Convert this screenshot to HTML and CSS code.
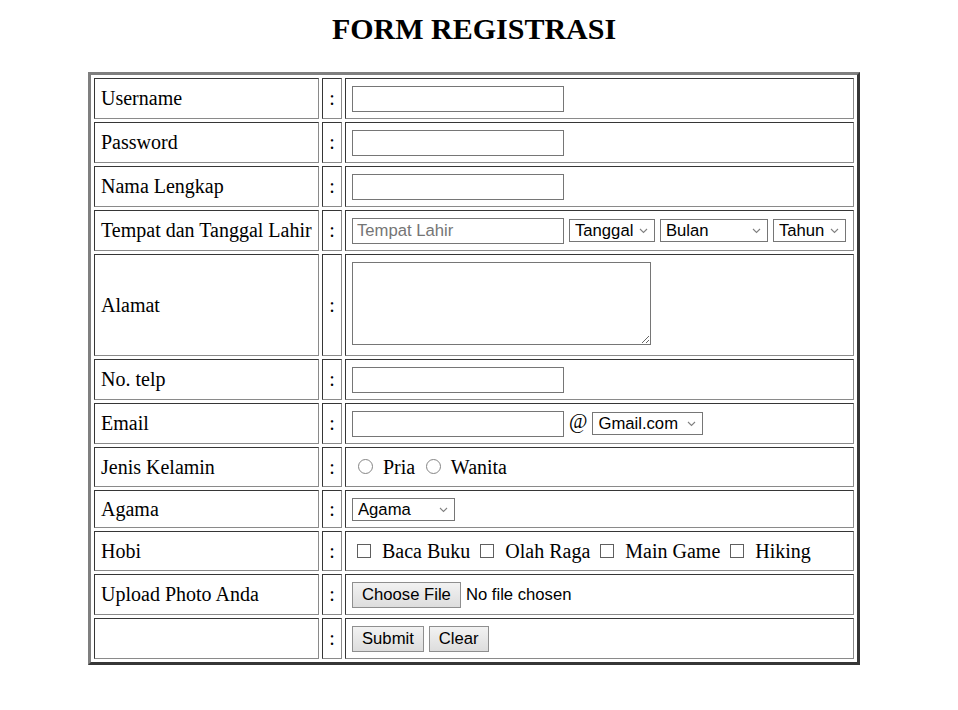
FILE: index.html
```html
<!DOCTYPE html>
<html>
<head>
<meta charset="utf-8">
<title>Form Registrasi</title>
<link rel="stylesheet" href="styles.css">
</head>
<body>
<div class="page">
  <h2 class="title">FORM REGISTRASI</h2>
  <form>
  <table class="form-table">
    <tr class="row">
      <td class="c-label">Username</td><td class="c-colon">:</td>
      <td class="c-field"><input class="txt" type="text"></td>
    </tr>
    <tr class="row">
      <td class="c-label">Password</td><td class="c-colon">:</td>
      <td class="c-field"><input class="txt" type="password"></td>
    </tr>
    <tr class="row">
      <td class="c-label">Nama Lengkap</td><td class="c-colon">:</td>
      <td class="c-field"><input class="txt" type="text"></td>
    </tr>
    <tr class="row">
      <td class="c-label">Tempat dan Tanggal Lahir</td><td class="c-colon">:</td>
      <td class="c-field"><input class="txt" type="text" placeholder="Tempat Lahir"> <select class="sel sel-tgl"><option>Tanggal</option></select> <select class="sel sel-bln"><option>Bulan</option></select> <select class="sel sel-thn"><option>Tahun</option></select></td>
    </tr>
    <tr class="row row-tall">
      <td class="c-label">Alamat</td><td class="c-colon">:</td>
      <td class="c-field"><textarea class="area"></textarea></td>
    </tr>
    <tr class="row">
      <td class="c-label">No. telp</td><td class="c-colon">:</td>
      <td class="c-field"><input class="txt" type="text"></td>
    </tr>
    <tr class="row">
      <td class="c-label">Email</td><td class="c-colon">:</td>
      <td class="c-field"><input class="txt" type="text"> @ <select class="sel sel-mail"><option>Gmail.com</option></select></td>
    </tr>
    <tr class="row row-40">
      <td class="c-label">Jenis Kelamin</td><td class="c-colon">:</td>
      <td class="c-field"><input class="radio" type="radio" name="jk"> Pria <input class="radio" type="radio" name="jk"> Wanita</td>
    </tr>
    <tr class="row row-38">
      <td class="c-label">Agama</td><td class="c-colon">:</td>
      <td class="c-field"><select class="sel sel-agama"><option>Agama</option></select></td>
    </tr>
    <tr class="row row-40">
      <td class="c-label">Hobi</td><td class="c-colon">:</td>
      <td class="c-field"><input class="check" type="checkbox"> Baca Buku <input class="check" type="checkbox"> Olah Raga <input class="check" type="checkbox"> Main Game <input class="check" type="checkbox"> Hiking</td>
    </tr>
    <tr class="row">
      <td class="c-label">Upload Photo Anda</td><td class="c-colon">:</td>
      <td class="c-field"><input class="file" type="file"></td>
    </tr>
    <tr class="row">
      <td class="c-label"></td><td class="c-colon">:</td>
      <td class="c-field"><input class="btn" type="submit" value="Submit"> <input class="btn" type="reset" value="Clear"></td>
    </tr>
  </table>
  </form>
</div>
</body>
</html>
```
FILE: styles.css
```css
html, body {
  margin: 0;
  padding: 0;
  background: #ffffff;
}

.page {
  width: 948px;
  padding-top: 12px;
  font-family: "Liberation Serif", "Times New Roman", serif;
  font-size: 20px;
  color: #000;
}

.title {
  margin: 0 0 26px;
  font-size: 30px;
  line-height: 34px;
  font-weight: bold;
  text-align: center;
}

.form-table {
  width: 772px;
  margin: 0 auto;
  table-layout: fixed;
  border-collapse: separate;
  border-spacing: 3px;
  border-style: solid;
  border-width: 3px;
  border-color: #7f7f7f #363636 #363636 #7f7f7f;
}

.row {
  height: 41px;
}

.row-tall {
  height: 102px;
}

.row-40 {
  height: 40px;
}

.row-38 {
  height: 38px;
}

.form-table td {
  box-sizing: border-box;
  padding: 0 6px;
  border-style: solid;
  border-width: 1px;
  border-color: #363636 #8a8a8a #8a8a8a #363636;
  vertical-align: middle;
  line-height: 23px;
  white-space: nowrap;
}

.form-table td.c-label {
  width: 225px;
  padding-left: 6px;
}

.form-table td.c-colon {
  width: 20px;
  padding: 0;
  text-align: center;
}

.txt {
  box-sizing: border-box;
  width: 212px;
  height: 26px;
  margin: 0;
  padding: 0 4px;
  border: 1px solid #767676;
  border-radius: 0;
  background: #fff;
  font-family: "Liberation Sans", Arial, sans-serif;
  font-size: 16.67px;
  color: #000;
  vertical-align: middle;
}

.txt::placeholder {
  color: #757575;
}

.sel {
  box-sizing: border-box;
  height: 23px;
  margin: 0;
  padding: 0 16px 0 5px;
  border: 1px solid #767676;
  border-radius: 0;
  -webkit-appearance: none;
  appearance: none;
  background-color: #fff;
  background-image: url("data:image/svg+xml;utf8,<svg xmlns='http://www.w3.org/2000/svg' width='9' height='6' viewBox='0 0 9 6'><polyline points='1,1 4.5,4.5 8,1' fill='none' stroke='%23808080' stroke-width='1.1'/></svg>");
  background-repeat: no-repeat;
  background-position: right 6px center;
  font-family: "Liberation Sans", Arial, sans-serif;
  font-size: 16.67px;
  color: #000;
  vertical-align: middle;
}

.sel-tgl { width: 86px; }
.sel-bln { width: 108px; }
.sel-thn { width: 73px; }
.sel-mail { width: 111px; }
.sel-agama { width: 103px; }

.area {
  display: block;
  box-sizing: border-box;
  width: 299px;
  height: 83px;
  margin: 0 0 4px;
  border: 1px solid #767676;
  border-radius: 0;
  font-family: "Liberation Mono", monospace;
  font-size: 16px;
}

.radio {
  -webkit-appearance: none;
  appearance: none;
  box-sizing: border-box;
  width: 15px;
  height: 15px;
  margin: 0 5px 0 6px;
  border: 1px solid #858585;
  border-radius: 50%;
  background: #fff;
  vertical-align: baseline;
}

.check {
  -webkit-appearance: none;
  appearance: none;
  box-sizing: border-box;
  width: 14px;
  height: 14px;
  margin: 0 6px 0 5px;
  border: 1px solid #5f5f5f;
  border-radius: 0;
  background: #fff;
  vertical-align: baseline;
}

.file {
  margin: 0;
  font-family: "Liberation Sans", Arial, sans-serif;
  font-size: 16.67px;
  color: #000;
  vertical-align: middle;
}

.file::file-selector-button {
  box-sizing: border-box;
  height: 26px;
  margin: 0 5px 0 0;
  padding: 0 9px;
  border: 1px solid #8f8f8f;
  border-radius: 0;
  background: linear-gradient(#f2f2f2, #dddddd);
  font-family: "Liberation Sans", Arial, sans-serif;
  font-size: 16.67px;
  color: #000;
}

.btn {
  box-sizing: border-box;
  height: 26px;
  margin: 0;
  padding: 0 9px;
  border: 1px solid #8f8f8f;
  border-radius: 0;
  background: linear-gradient(#f2f2f2, #dddddd);
  font-family: "Liberation Sans", Arial, sans-serif;
  font-size: 16.67px;
  color: #000;
  vertical-align: middle;
}
```
